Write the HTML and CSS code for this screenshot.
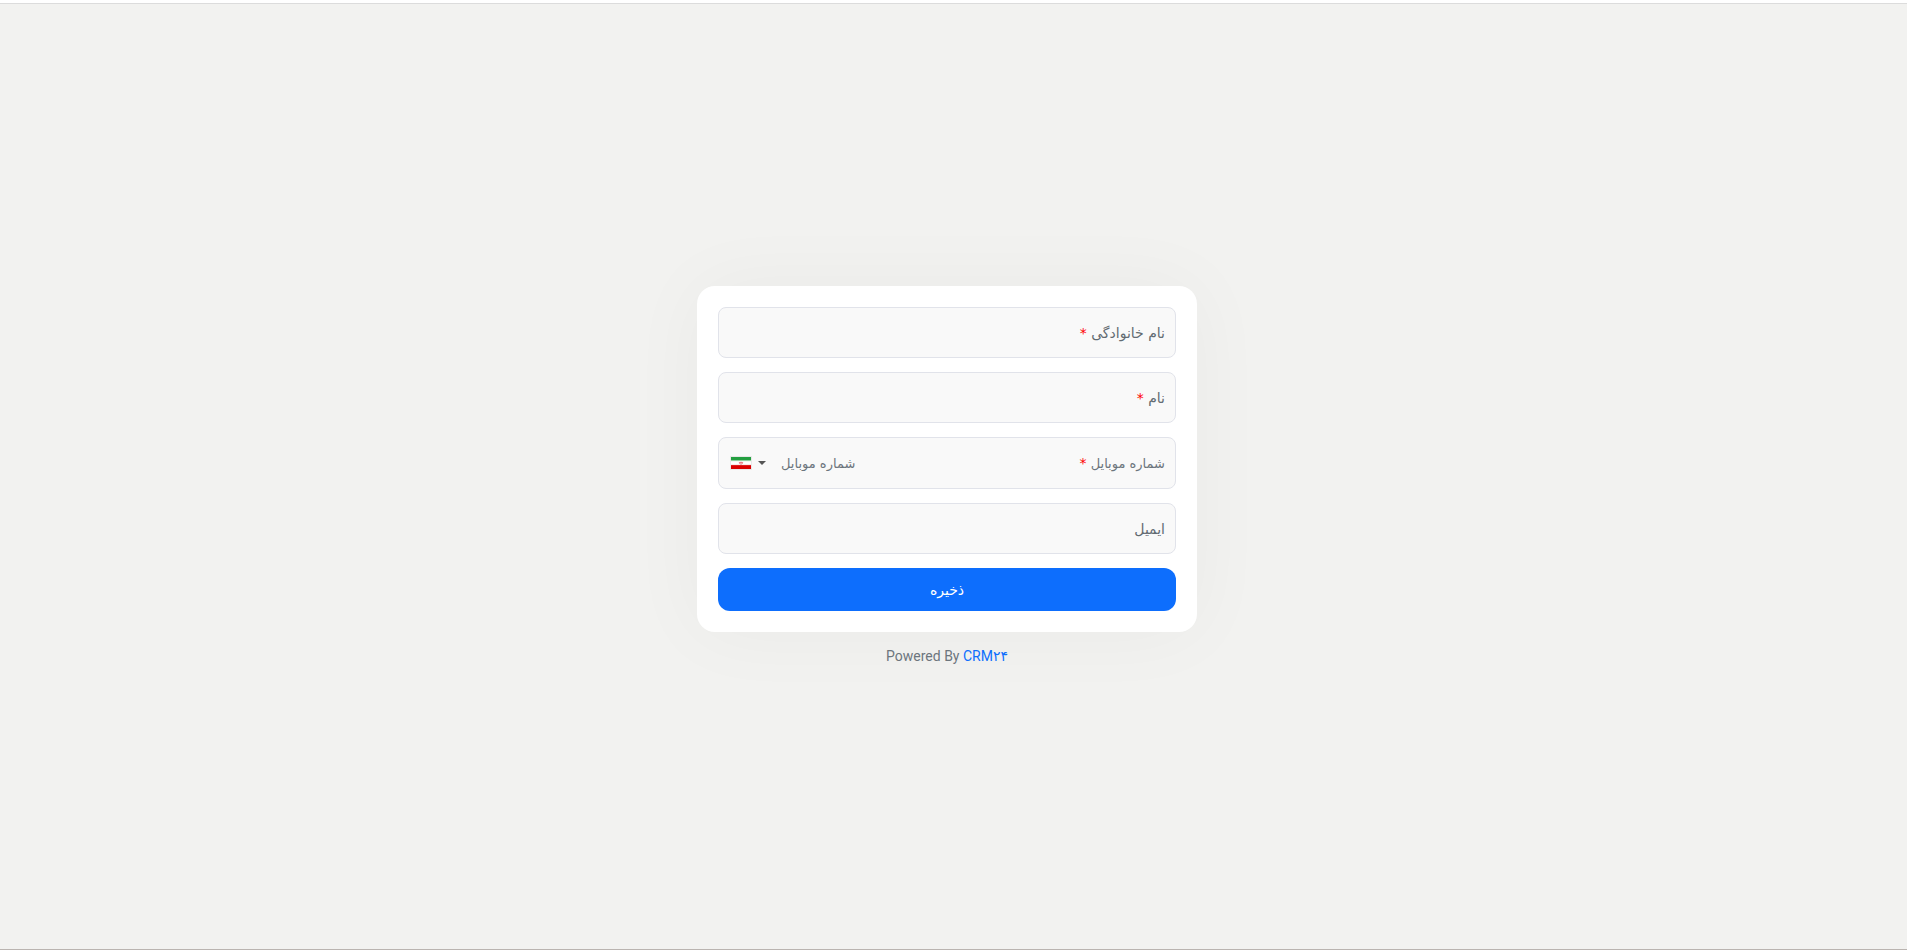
FILE: index.html
```html
<!DOCTYPE html>
<html lang="fa" dir="rtl">
<head>
<meta charset="utf-8">
<meta name="viewport" content="width=device-width, initial-scale=1">
<title>CRM24</title>
<link rel="stylesheet" href="styles.css">
</head>
<body>
<main class="page">
  <form class="card">
    <div class="field">
      <label class="label strong" for="last-name">نام خانوادگی <span class="required">*</span></label>
      <input class="input" id="last-name" type="text" required>
    </div>
    <div class="field">
      <label class="label strong" for="first-name">نام <span class="required">*</span></label>
      <input class="input" id="first-name" type="text" required>
    </div>
    <div class="field phone">
      <label class="label" for="mobile">شماره موبایل <span class="required">*</span></label>
      <input class="input" id="mobile" type="tel" dir="ltr" placeholder="شماره موبایل" required>
      <button class="country" type="button" aria-label="ایران">
        <svg class="flag" viewBox="0 0 22 14" aria-hidden="true">
          <rect width="22" height="14" fill="#e8e8e8"/>
          <rect x="1" y="1" width="20" height="4" fill="#239f40"/>
          <rect x="1" y="4.500" width="20" height="5" fill="#fff"/>
          <rect x="1" y="9" width="20" height="4" fill="#da0000"/>
          <path d="M1 4.700h20" stroke="#8fcf9e" stroke-width=".6"/>
          <path d="M1 9.100h20" stroke="#ee8080" stroke-width=".4"/>
          <path d="M9.400 6q-.5 1.500 1 2.200M12.600 6q.5 1.500-1 2.200M11 5.700v2.800M10 6.700h2" fill="none" stroke="#e0616a" stroke-width=".8"/>
        </svg>
        <svg class="caret" viewBox="0 0 8 4" aria-hidden="true"><path d="M0 0h8L4 4z" fill="#555"/></svg>
      </button>
    </div>
    <div class="field">
      <label class="label strong" for="email">ایمیل</label>
      <input class="input" id="email" type="email">
    </div>
    <button class="submit" type="submit">ذخیره</button>
  </form>
  <p class="powered" dir="ltr">Powered By <a class="brand" href="#">CRM۲۴</a></p>
</main>
</body>
</html>
```

FILE: styles.css
```css
* {
  box-sizing: border-box;
}

body {
  margin: 0;
  background: #f2f2f0;
  color: #6c757d;
  font-family: Roboto, "DejaVu Sans", sans-serif;
  font-size: 14px;
  line-height: 20px;
}

.page {
  display: flex;
  flex-direction: column;
  align-items: center;
  justify-content: center;
  gap: 14px;
  min-height: 100vh;
  padding-right: 13px;
  border-top: 3px solid #fff;
  border-bottom: 1px solid #bab4b0;
  box-shadow: inset 0 1px #dcdcdc;
}

.card {
  display: flex;
  flex-direction: column;
  gap: 14px;
  width: 100%;
  max-width: 500px;
  padding: 21px;
  border-radius: 18px;
  background: #fff;
  box-shadow: 0 0 80px rgba(0, 0, 0, 0.04);
}

.field {
  display: flex;
  align-items: center;
  min-height: 51px;
  border: 1px solid #e1e3ea;
  border-radius: 8px;
  background: #f9f9f9;
}

.phone {
  min-height: 52px;
}

.label {
  padding: 0 10px;
  font-family: "DejaVu Sans", sans-serif;
  font-size: 13px;
  white-space: nowrap;
}

.strong {
  color: #626b72;
  font-size: 14px;
}

.required {
  color: #f00;
  font-size: 14px;
}

.input {
  flex: 1;
  min-width: 0;
  height: 48px;
  padding: 0 7px;
  border: 0;
  background: transparent;
  color: #333;
  font-family: "DejaVu Sans", sans-serif;
  font-size: 13px;
  outline: 0;
}

.input::placeholder {
  color: #6c757d;
  opacity: 1;
}

.country {
  display: flex;
  direction: ltr;
  align-items: center;
  gap: 6px;
  padding: 0 8px 0 11px;
  border: 0;
  background: transparent;
}

.flag {
  width: 22px;
  height: 14px;
}

.caret {
  width: 8px;
  height: 4px;
}

.submit {
  height: 43px;
  border: 0;
  border-radius: 12px;
  background: #0d6efd;
  color: #fff;
  font-family: "DejaVu Sans", sans-serif;
  font-size: 14px;
}

.powered {
  margin: 0;
}

.brand {
  color: #0d6efd;
  text-decoration: none;
}
```
